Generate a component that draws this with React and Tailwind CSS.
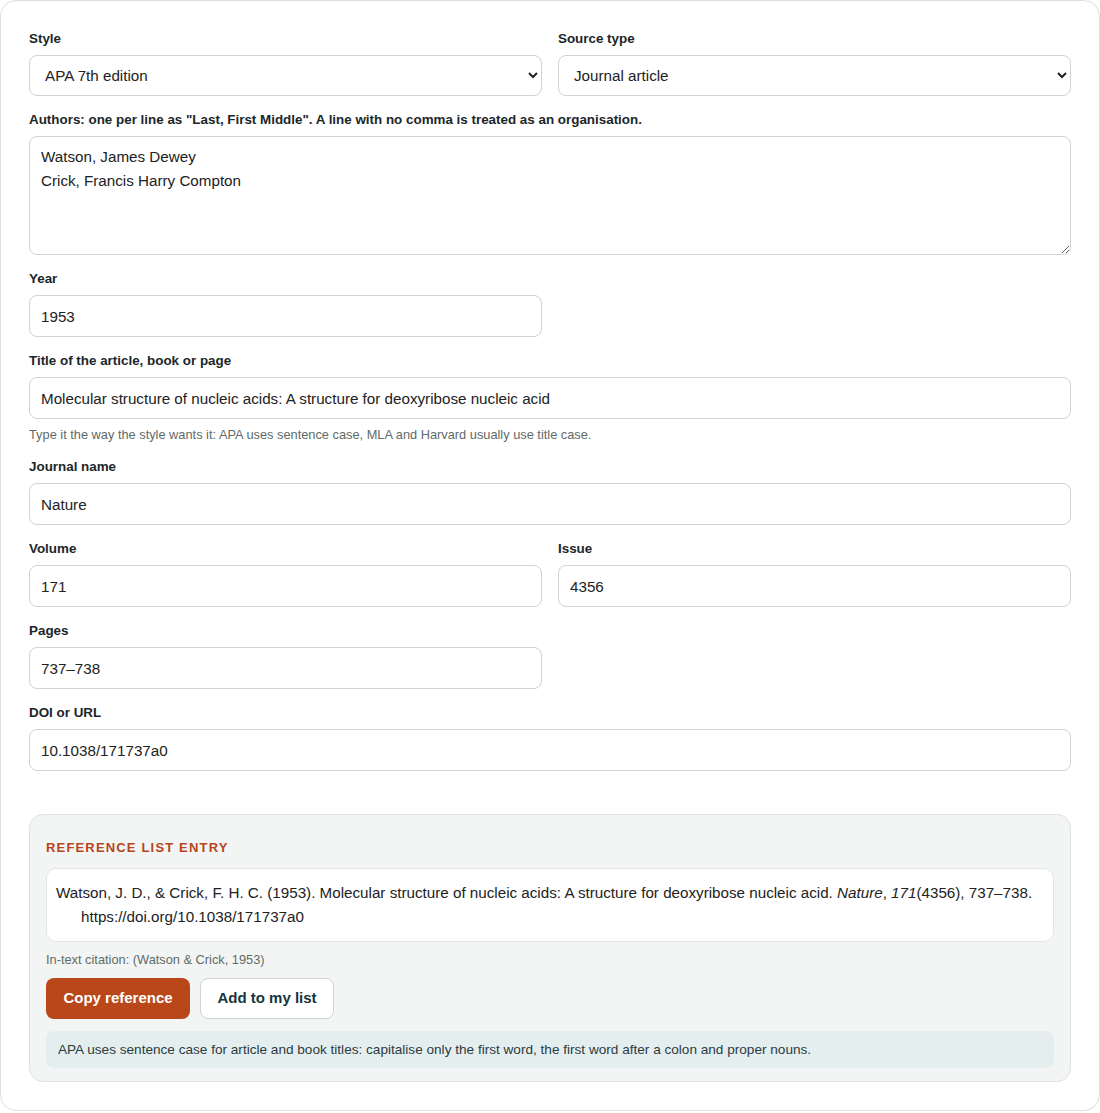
import { useState } from "react";

const font = { fontFamily: '"Liberation Sans", Arial, sans-serif' };

function Label({ children }) {
  return (
    <label className="block text-[13.4px] leading-5 font-bold text-[#1c2628] mb-1.5">
      {children}
    </label>
  );
}

function TextInput({ value }) {
  return (
    <input
      defaultValue={value}
      className="block w-full h-[42px] rounded-lg border border-[#cfd3d2] bg-white px-[11px] text-[15.2px] text-[#222] outline-none"
    />
  );
}

function Select({ value, options }) {
  return (
    <select
      defaultValue={value}
      className="block w-full h-[41px] rounded-lg border border-[#cfd3d2] bg-white pl-[11px] pr-2 text-[15.2px] text-[#222] outline-none"
    >
      {options.map((o) => (
        <option key={o}>{o}</option>
      ))}
    </select>
  );
}

export default function App() {
  const [authors] = useState("Watson, James Dewey\nCrick, Francis Harry Compton");

  return (
    <div style={font} className="w-[1100px] bg-white">
      <div className="border border-[#dcdfde] rounded-2xl p-[28px] bg-white">
        <div className="flex flex-col gap-[14px]">
          <div className="grid grid-cols-2 gap-4">
            <div>
              <Label>Style</Label>
              <Select value="APA 7th edition" options={["APA 7th edition", "MLA 9th edition", "Harvard"]} />
            </div>
            <div>
              <Label>Source type</Label>
              <Select value="Journal article" options={["Journal article", "Book", "Web page"]} />
            </div>
          </div>

          <div>
            <Label>Authors: one per line as "Last, First Middle". A line with no comma is treated as an organisation.</Label>
            <textarea
              defaultValue={authors}
              className="block w-full h-[119px] rounded-lg border border-[#cfd3d2] bg-white px-[11px] py-2 text-[15.2px] leading-6 text-[#222] outline-none"
            />
          </div>

          <div className="grid grid-cols-2 gap-4">
            <div>
              <Label>Year</Label>
              <TextInput value="1953" />
            </div>
          </div>

          <div>
            <Label>Title of the article, book or page</Label>
            <TextInput value="Molecular structure of nucleic acids: A structure for deoxyribose nucleic acid" />
            <p className="mt-2 text-[12.8px] leading-4 text-[#5f6b69]">
              Type it the way the style wants it: APA uses sentence case, MLA and Harvard usually use title case.
            </p>
          </div>

          <div>
            <Label>Journal name</Label>
            <TextInput value="Nature" />
          </div>

          <div className="grid grid-cols-2 gap-4">
            <div>
              <Label>Volume</Label>
              <TextInput value="171" />
            </div>
            <div>
              <Label>Issue</Label>
              <TextInput value="4356" />
            </div>
          </div>

          <div className="grid grid-cols-2 gap-4">
            <div>
              <Label>Pages</Label>
              <TextInput value="737–738" />
            </div>
          </div>

          <div>
            <Label>DOI or URL</Label>
            <TextInput value="10.1038/171737a0" />
          </div>
        </div>

        <div className="mt-[43px] rounded-[14px] border border-[#dde2df] bg-[#f2f5f3] px-4 pt-[25px] pb-[13px]">
          <h2 className="text-[13px] leading-4 font-bold tracking-[0.09em] text-[#b5451c]">
            REFERENCE LIST ENTRY
          </h2>
          <div className="mt-3 rounded-[10px] border border-[#e2e6e3] bg-white py-3 pr-3 pl-[34px] -indent-[25px] text-[15.2px] leading-6 text-[#222]">
            Watson, J. D., &amp; Crick, F. H. C. (1953). Molecular structure of nucleic acids: A structure for deoxyribose nucleic acid. <i>Nature</i>, <i>171</i>(4356), 737–738. https://doi.org/10.1038/171737a0
          </div>
          <p className="mt-[10px] text-[12.8px] leading-4 text-[#5f6b69]">
            In-text citation: (Watson &amp; Crick, 1953)
          </p>
          <div className="mt-[10px] flex gap-[10px]">
            <button className="h-[41px] w-[144px] rounded-lg bg-[#b9471a] text-[15px] font-bold text-white">
              Copy reference
            </button>
            <button className="h-[41px] w-[134px] rounded-lg border border-[#cfd3d2] bg-white text-[15px] font-bold text-[#15343b]">
              Add to my list
            </button>
          </div>
          <div className="mt-3 rounded-lg bg-[#e5eeef] px-3 py-[10px] text-[13.6px] leading-[17px] text-[#2b3b3e]">
            APA uses sentence case for article and book titles: capitalise only the first word, the first word after a colon and proper nouns.
          </div>
        </div>
      </div>
    </div>
  );
}
